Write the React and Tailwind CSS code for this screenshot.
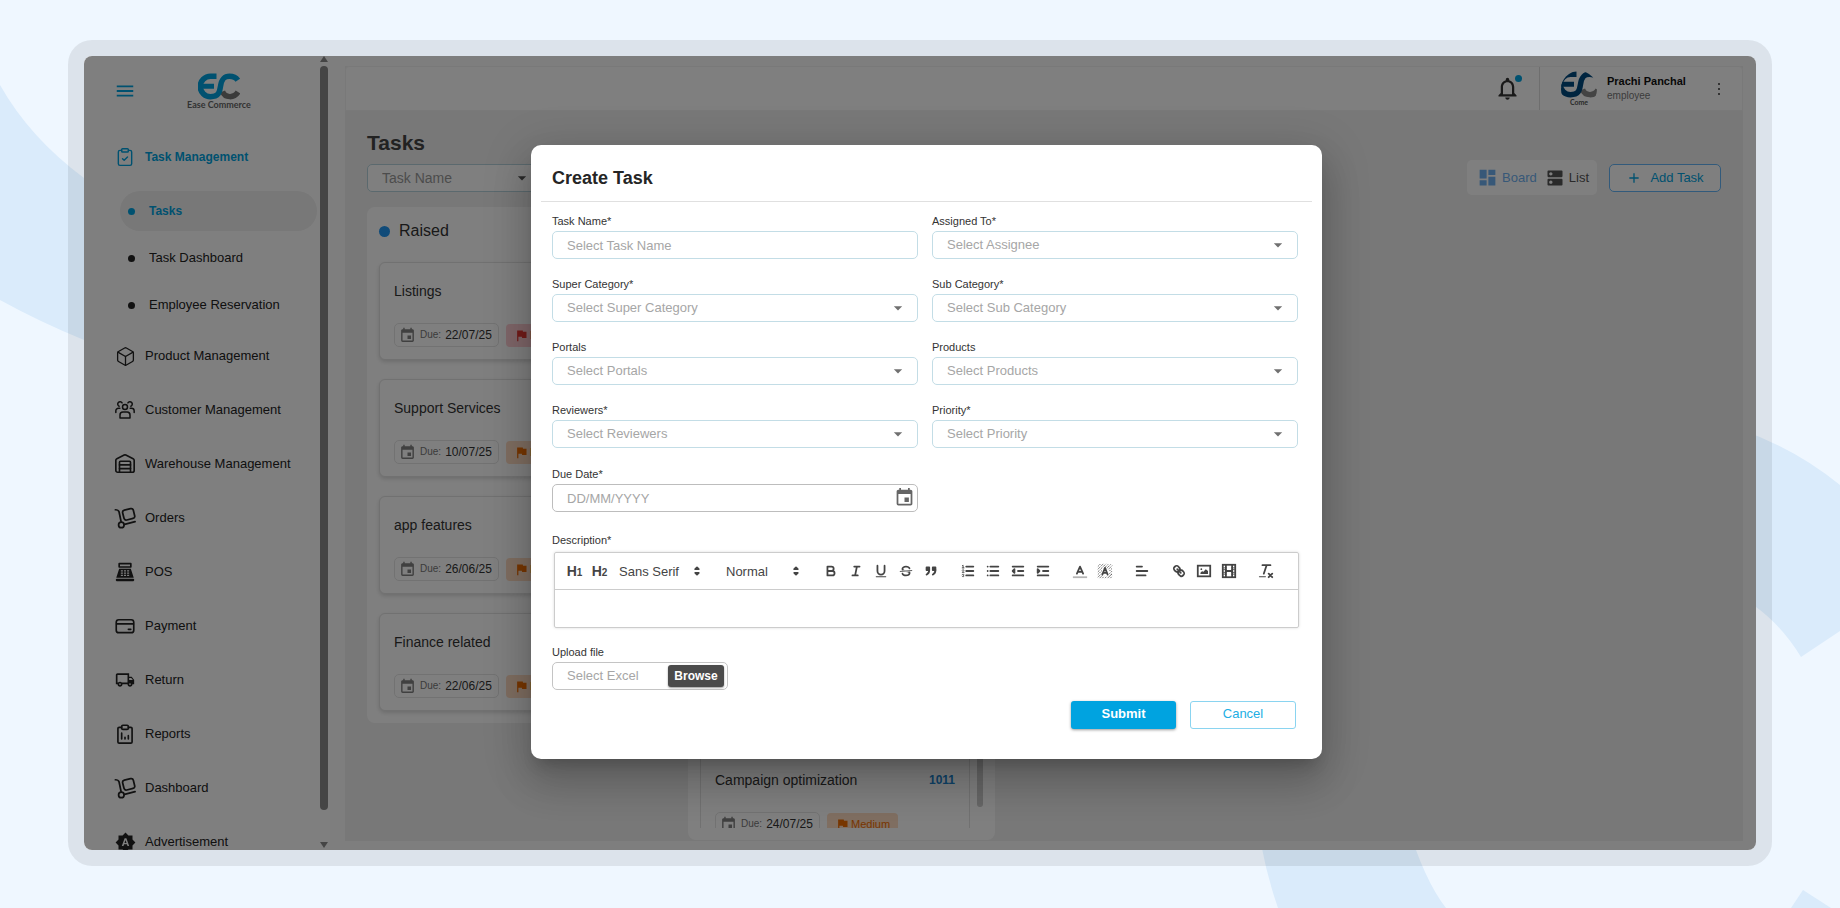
import { useState } from "react";
import { Box, ClipboardCheck, Warehouse } from "lucide-react";
import {
  MdAdd, MdArrowDropDown, MdBrightnessAuto, MdDashboard, MdDns, MdEvent, MdFlag,
  MdMenu, MdNotificationsNone, MdOutlineLocalShipping,
} from "react-icons/md";

/* ---------- icons the packages don't have ---------- */

function LineIcon({ children, size = 20, stroke = 1.8 }) {
  return (
    <svg width={size} height={size} viewBox="0 0 24 24" fill="none" stroke="currentColor" strokeWidth={stroke} strokeLinecap="round" strokeLinejoin="round" aria-hidden="true">
      {children}
    </svg>
  );
}

const PeopleIcon = () => (
  <LineIcon>
    <circle cx="12" cy="8.500" r="3" />
    <path d="M6 21.500v-3.500a3.500 3.500 0 0 1 3.500-3.500h5a3.500 3.500 0 0 1 3.500 3.500v3.500z" />
    <path d="M8.500 3.500A2.800 2.800 0 1 0 5 7.500M15.500 3.500a2.800 2.800 0 1 1 3.500 4" />
    <path d="M1 15v-2A3.200 3.200 0 0 1 4.200 9.800h1.600M23 15v-2a3.200 3.200 0 0 0-3.200-3.200h-1.600" />
  </LineIcon>
);

const DollyIcon = () => (
  <LineIcon size={22} stroke={1.9}>
    <path d="M1.500 3c2 0 3.300.300 4 2.200l2.300 11" />
    <rect x="10" y="2.500" width="12" height="11" rx="2.500" transform="rotate(-14 16 8)" />
    <circle cx="8" cy="19.500" r="3" />
    <path d="M11.500 19 23 16" />
  </LineIcon>
);

const RegisterIcon = () => (
  <svg width="20" height="20" viewBox="0 0 24 24" fill="currentColor" aria-hidden="true">
    <path fillRule="evenodd" d="M5 1h14a1 1 0 0 1 1 1v4a1 1 0 0 1-1 1H5a1 1 0 0 1-1-1V2a1 1 0 0 1 1-1Zm1 2v2h12V3Z" />
    <path fillRule="evenodd" d="M5 8h14l3.500 11h-21Zm2 2v1.500h2.500V10Zm3.700 0v1.500h2.600V10Zm3.800 0v1.500H17V10Zm-7.500 2.700v1.500h2.500v-1.500Zm3.700 0v1.500h2.600v-1.500Zm3.800 0v1.500H17v-1.500ZM7 15.400v1.400h2.500v-1.400Zm3.700 0v1.400h2.600v-1.400Zm3.800 0v1.400H17v-1.400Z" />
    <rect x="1" y="20" width="22" height="3" rx="1" />
  </svg>
);

const PaymentIcon = () => (
  <LineIcon stroke={2}>
    <rect x="1.500" y="4.500" width="21" height="15.500" rx="3" />
    <path d="M2 9.500h20M16 16h3" />
  </LineIcon>
);

const ReportIcon = () => (
  <LineIcon stroke={2}>
    <path d="M8 4H5a1.500 1.500 0 0 0-1.500 1.500v16A1.500 1.500 0 0 0 5 23h14a1.500 1.500 0 0 0 1.500-1.500v-16A1.500 1.500 0 0 0 19 4h-3" />
    <rect x="8" y="1.500" width="8" height="5" rx="1.500" />
    <path d="M8 18v-7M12 18v-2M16 18v-4" />
  </LineIcon>
);

const DotsIcon = () => (
  <svg width="18" height="18" viewBox="0 0 18 18" fill="currentColor" aria-hidden="true">
    <circle cx="9" cy="4" r="1.100" />
    <circle cx="9" cy="9" r="1.100" />
    <circle cx="9" cy="14" r="1.100" />
  </svg>
);

function Logo({ className, main, tail }) {
  return (
    <svg viewBox="0 0 42 27" className={className} fill="none" strokeWidth="5.500" aria-hidden="true">
      <path stroke={tail} d="M24.500 18.500c2.500 6.500 11.500 7 15.500.500" />
      <path stroke={main} d="M18.500 3.200H12.500a10 10 0 0 0 0 20.500c8 0 9-4 10-10.300C23.600 6 26 3.200 31.500 3.200c4 0 6.500 1.300 8.300 4" />
      <path stroke={main} strokeWidth="5" d="M3 13.300h13" />
    </svg>
  );
}

/* ---------- rich text editor toolbar ---------- */

function EditorIcon({ children }) {
  return (
    <svg width="16" height="16" viewBox="0 0 18 18" fill="none" stroke="currentColor" strokeWidth="2" strokeLinecap="round" strokeLinejoin="round" aria-hidden="true">
      {children}
    </svg>
  );
}

const solid = { fill: "currentColor", stroke: "none" };

const editorIcons = {
  Bold: (
    <path d="M5 4h4.500a2.500 2.500 0 0 1 0 5H5zM5 9h5.500a2.500 2.500 0 0 1 0 5H5z" />
  ),
  Italic: <path d="M7 4h6M5 14h6M8 14l2-10" />,
  Underline: (
    <>
      <path d="M5 3v6a4 4 0 0 0 8 0V3" />
      <rect {...solid} x="3" y="15" width="12" height="1" rx=".5" />
    </>
  ),
  Strike: (
    <>
      <path strokeWidth="1" d="M15.500 8.500l-13 1" />
      <path {...solid} d="M9.007 8C6.542 7.791 6 7.519 6 6.500 6 5.792 7.283 5 9 5c1.571 0 2.765.679 2.969 1.309a1 1 0 0 0 1.900-.617C13.356 4.106 11.354 3 9 3 6.200 3 4 4.538 4 6.500a3.200 3.200 0 0 0 .500 1.843Z" />
      <path {...solid} d="M8.984 10c2.473.208 3.016.479 3.016 1.500 0 .708-1.283 1.500-3 1.500-1.571 0-2.765-.679-2.969-1.309a1 1 0 1 0-1.900.617C4.644 13.894 6.646 15 9 15c2.800 0 5-1.538 5-3.500a3.200 3.200 0 0 0-.500-1.843Z" />
    </>
  ),
  Quote: (
    <g fill="currentColor">
      <rect x="4" y="5" width="3" height="3" />
      <rect x="11" y="5" width="3" height="3" />
      <path d="M7 8c0 4.031-3 5-3 5M14 8c0 4.031-3 5-3 5" />
    </g>
  ),
  "Ordered list": (
    <>
      <path d="M7 4h8M7 9h8M7 14h8" />
      <path strokeWidth="1" d="M2.700 3l.8-.5v3M2.500 5.500h2M4.500 10.500h-2c0-.234 1.850-1.076 1.850-2.234A.959.959 0 0 0 2.500 8.156M2.500 14.846a.959.959 0 0 0 1.850-.109A.700.700 0 0 0 3.750 14a.688.688 0 0 0 .600-.736.959.959 0 0 0-1.850-.109" />
    </>
  ),
  "Bullet list": <path d="M6 4h9M6 9h9M6 14h9M3 4h0M3 9h0M3 14h0" />,
  Outdent: (
    <>
      <path d="M3 14h12M3 4h12M9 9h6" />
      <path fill="currentColor" d="M5 7v4L3 9z" />
    </>
  ),
  Indent: (
    <>
      <path d="M3 14h12M3 4h12M9 9h6" />
      <path fill="currentColor" d="M3 7v4l2-2z" />
    </>
  ),
  "Text colour": (
    <>
      <path opacity=".4" strokeLinecap="butt" d="M1 16h16" />
      <path d="M5.500 12 9 4l3.500 8M11.600 10H6.400" />
    </>
  ),
  "Background colour": (
    <>
      <path strokeWidth="1" strokeDasharray="1.400 1" strokeLinecap="butt" d="M1 4l3-3M1 7l6-6M1 10l9-9M1 13l5-5M1 16l4-4M8 6l5-5M11 6l5-5M13 7l4-4M14 9l3-3M14 12l3-3M14 15l3-3M3 17l3-3M6 17l2-2M9 17l2-2M12 17l5-5M15 17l2-2" />
      <path d="M6 13l3-7.500L12 13M11 11H7" />
    </>
  ),
  Align: <path d="M3 9h12M3 14h10M3 4h6" />,
  Link: (
    <path d="M7 7l4 4M8.900 4.577a3.476 3.476 0 0 1 .360 4.679A3.476 3.476 0 0 1 4.577 8.900C3.185 7.500 2.035 6.400 4.217 4.217S7.500 3.185 8.900 4.577ZM13.423 9.100a3.476 3.476 0 0 0-4.679-.360 3.476 3.476 0 0 0 .360 4.679c1.392 1.392 2.500 2.542 4.679.360S14.815 10.500 13.423 9.100Z" />
  ),
  Image: (
    <>
      <rect x="2" y="3" width="14" height="12" strokeLinejoin="miter" />
      <circle {...solid} cx="6" cy="7" r="1" />
      <path {...solid} d="M5 12.500V11l2-2 1 1 3-3 2.500 2v3.500z" />
    </>
  ),
  Video: (
    <>
      <rect x="2" y="2" width="14" height="14" strokeLinejoin="miter" />
      <path d="M5.500 2v14M12.500 2v14M6 9h6" />
      <path strokeWidth="1" d="M3 5.500h3M3 7.500h3M3 10.500h3M3 12.500h3M12 5.500h3M12 7.500h3M12 10.500h3M12 12.500h3" />
    </>
  ),
  "Clear formatting": (
    <>
      <path d="M5 2.500h9M6.500 12l3-9" />
      <path d="M12 12l4 4M16 12l-4 4" />
      <rect {...solid} x="1" y="15" width="8" height="1" rx=".5" />
    </>
  ),
};

const editorGroups = [
  ["Bold", "Italic", "Underline", "Strike", "Quote"],
  ["Ordered list", "Bullet list", "Outdent", "Indent"],
  ["Text colour", "Background colour"],
  ["Align"],
  ["Link", "Image", "Video"],
  ["Clear formatting"],
];

function EditorPicker({ label, options, className }) {
  return (
    <div className={`relative ${className}`}>
      <select aria-label={label} className="w-full h-6 pl-[7px] appearance-none bg-transparent text-[13px] text-[#444] outline-none">
        {options.map((o) => <option key={o}>{o}</option>)}
      </select>
      <span className="absolute right-0.5 top-1 pointer-events-none">
        <EditorIcon>
          <path fill="currentColor" d="M7 11l2 2 2-2zM7 7l2-2 2 2z" />
        </EditorIcon>
      </span>
    </div>
  );
}

function Editor() {
  return (
    <div className="mx-0.5 border border-[#ccc] rounded-[2px] shadow-[0_0_3px_rgba(0,0,0,0.15)]">
      <div className="flex items-center gap-3 h-[37px] pl-[7px] border-b border-[#ccc] text-[#444]">
        <div className="flex items-center">
          {[1, 2].map((n) => (
            <button key={n} type="button" aria-label={`Heading ${n}`} className="w-[25px] h-6 text-sm font-bold leading-6">
              H<span className="text-[10px]">{n}</span>
            </button>
          ))}
          <EditorPicker label="Font" options={["Sans Serif", "Serif", "Monospace"]} className="w-[95px]" />
        </div>
        <EditorPicker label="Size" options={["Normal", "Small", "Large", "Huge"]} className="w-[87px]" />
        {editorGroups.map((group) => (
          <div key={group[0]} className="flex">
            {group.map((name) => (
              <button key={name} type="button" aria-label={name} className="w-[25px] h-6 flex items-center justify-center">
                <EditorIcon>{editorIcons[name]}</EditorIcon>
              </button>
            ))}
          </div>
        ))}
      </div>
      <textarea id="description" className="block w-full h-[37px] px-3 py-2 text-[13px] text-[#444] resize-none outline-none" />
    </div>
  );
}

/* ---------- form ---------- */

function Field({ id, label, children, className = "" }) {
  return (
    <div className={className}>
      <label htmlFor={id} className="block mb-[3px] text-[11px] leading-[14px] text-[#333]">{label}</label>
      {children}
    </div>
  );
}

function SelectBox({ id, placeholder }) {
  return (
    <div className="relative">
      <select id={id} defaultValue="" className="w-full h-7 pl-3.5 pr-10 appearance-none rounded-[5px] border border-[#c3dde6] bg-white text-[13px] text-[#a6a6a6] outline-none">
        <option value="">{placeholder}</option>
      </select>
      <MdArrowDropDown size={20} className="absolute right-2.5 top-1 text-[#707070] pointer-events-none" />
    </div>
  );
}

const selects = [
  ["superCategory", "Super Category*", "Select Super Category"],
  ["subCategory", "Sub Category*", "Select Sub Category"],
  ["portals", "Portals", "Select Portals"],
  ["products", "Products", "Select Products"],
  ["reviewers", "Reviewers*", "Select Reviewers"],
  ["priority", "Priority*", "Select Priority"],
];

function CreateTaskModal() {
  const [taskName, setTaskName] = useState("");
  const [dueDate, setDueDate] = useState("");

  return (
    <div className="absolute inset-0 z-10 flex items-center justify-center pl-[13px] pb-0.5 bg-black/50">
      <div role="dialog" aria-labelledby="create-task" className="w-full max-w-[791px] rounded-[10px] bg-white shadow-[0_11px_15px_-7px_rgba(0,0,0,0.2),0_24px_38px_3px_rgba(0,0,0,0.14),0_9px_46px_8px_rgba(0,0,0,0.12)]">
        <div className="mx-2.5 px-[11px] pt-[21px] pb-[11px] border-b border-[#e0e0e0]">
          <h2 id="create-task" className="text-lg leading-6 font-bold text-[#252525]">Create Task</h2>
        </div>

        <form onSubmit={(e) => e.preventDefault()} className="pl-[21px] pr-6 pt-3 pb-[30px]">
          <div className="grid grid-cols-2 gap-x-3.5 gap-y-[18px]">
            <Field id="taskName" label="Task Name*">
              <input id="taskName" type="text" placeholder="Select Task Name" value={taskName} onChange={(e) => setTaskName(e.target.value)}
                className="block w-full h-7 px-3.5 rounded-[5px] border border-[#c3dde6] text-[13px] placeholder:text-[#a6a6a6] outline-none" />
            </Field>
            <Field id="assignedTo" label="Assigned To*">
              <SelectBox id="assignedTo" placeholder="Select Assignee" />
            </Field>
            {selects.map(([id, label, placeholder]) => (
              <Field key={id} id={id} label={label}>
                <SelectBox id={id} placeholder={placeholder} />
              </Field>
            ))}
            <Field id="dueDate" label="Due Date*" className="mt-px">
              <div className="relative">
                <input id="dueDate" type="text" placeholder="DD/MM/YYYY" value={dueDate} onChange={(e) => setDueDate(e.target.value)}
                  className="block w-full h-7 px-3.5 rounded-[5px] border border-[#bdbdbd] text-[13px] placeholder:text-[#a6a6a6] outline-none" />
                <button type="button" aria-label="Choose date" className="absolute right-[3px] top-[3px]">
                  <MdEvent size={21} className="text-[#666]" />
                </button>
              </div>
            </Field>
          </div>

          <div className="mt-[21px]">
            <label htmlFor="description" className="block mb-[5px] text-[11px] leading-[14px] text-[#333]">Description*</label>
            <div className="-mr-[3px]"><Editor /></div>
          </div>

          <Field id="upload" label="Upload file" className="mt-[17px]">
            <div className="flex items-center w-44 h-7 pr-[3px] rounded-[5px] border border-[#c4c4c4]">
              <input id="upload" type="text" readOnly placeholder="Select Excel" className="flex-1 min-w-0 pl-3.5 text-[13px] placeholder:text-[#a6a6a6] outline-none" />
              <button type="button" className="w-14 h-[22px] rounded-[3px] bg-[#4b4b4b] text-xs font-bold text-white shadow-[0_1px_2px_rgba(0,0,0,0.4)]">Browse</button>
            </div>
          </Field>

          <div className="flex justify-end gap-3.5 mt-[11px] pr-0.5">
            <button type="submit" className="w-[105px] h-7 pb-0.5 rounded-[3px] bg-[#00a3e0] text-[13px] font-bold text-white shadow-[0_1px_3px_rgba(0,0,0,0.4)]">Submit</button>
            <button type="button" className="w-[106px] h-7 pb-0.5 rounded-[3px] border border-[#8ad4f0] text-[13px] text-[#22aee4]">Cancel</button>
          </div>
        </form>
      </div>
    </div>
  );
}

/* ---------- sidebar ---------- */

const subMenu = ["Tasks", "Task Dashboard", "Employee Reservation"];

const menu = [
  { label: "Product Management", icon: <Box size={21} strokeWidth={1.5} /> },
  { label: "Customer Management", icon: <PeopleIcon /> },
  { label: "Warehouse Management", icon: <Warehouse size={22} strokeWidth={1.8} /> },
  { label: "Orders", icon: <DollyIcon /> },
  { label: "POS", icon: <RegisterIcon /> },
  { label: "Payment", icon: <PaymentIcon /> },
  { label: "Return", icon: <MdOutlineLocalShipping size={20} /> },
  { label: "Reports", icon: <ReportIcon /> },
  { label: "Dashboard", icon: <DollyIcon /> },
  { label: "Advertisement", icon: <MdBrightnessAuto size={21} /> },
];

function Sidebar() {
  return (
    <aside className="flex w-[246px] shrink-0 bg-white">
      <div className="flex-1 overflow-hidden">
        <div className="flex items-start h-[74px] pl-[30px] pt-[17px]">
          <button type="button" aria-label="Menu" className="mt-[7px] text-[#00a3e0]"><MdMenu size={22} /></button>
          <div className="ml-[51px] flex flex-col items-center">
            <Logo className="w-[42px] h-[27px]" main="#00a3e0" tail="#777" />
            <span className="font-[Lato] text-[9px] leading-[10px] font-bold text-[#666]">Ease Commerce</span>
          </div>
        </div>
        <nav className="text-[13px] text-[#222]">
          <a href="#tasks" className="flex items-center h-[54px] pl-[30px] text-xs font-bold text-[#00a3e0]">
            <span className="w-[22px] flex justify-center"><ClipboardCheck size={20} strokeWidth={1.7} /></span>
            <span className="ml-[9px]">Task Management</span>
          </a>
          <div className="flex flex-col gap-[7px] pt-[7px] pb-1 pl-9 pr-[3px]">
            {subMenu.map((label, i) => (
              <a key={label} href="#tasks" className={`flex items-center gap-[14px] h-10 pl-2 rounded-full ${i === 0 ? "bg-[#f0f0f0] font-bold text-xs text-[#00a3e0]" : ""}`}>
                <span className={`w-[7px] h-[7px] rounded-full ${i === 0 ? "bg-[#00a3e0]" : "bg-[#222]"}`} />
                {label}
              </a>
            ))}
          </div>
          {menu.map(({ label, icon }) => (
            <a key={label} href="#tasks" className="flex items-center h-[54px] pl-[30px]">
              <span className="w-[22px] flex justify-center">{icon}</span>
              <span className="ml-[9px]">{label}</span>
            </a>
          ))}
        </nav>
      </div>
      <div className="w-2 mr-0.5 flex flex-col items-center gap-1">
        <svg width="8" height="6" viewBox="0 0 8 6" fill="#8a8a8a"><path d="M4 0l4 6H0z" /></svg>
        <div className="w-2 flex-1 rounded-full bg-[#8a8a8a]" />
        <svg width="8" height="6" viewBox="0 0 8 6" fill="#8a8a8a" className="mt-7 mb-0.5"><path d="M4 6l4-6H0z" /></svg>
      </div>
    </aside>
  );
}

/* ---------- board ---------- */

const raised = [
  { title: "Listings", due: "22/07/25", level: "High" },
  { title: "Support Services", due: "10/07/25", level: "Medium" },
  { title: "app features", due: "26/06/25", level: "Medium" },
  { title: "Finance related", due: "22/06/25", level: "Medium" },
];

function TaskCard({ title, due, level, id }) {
  return (
    <article className="h-[98px] shrink-0 px-[14px] pt-[18px] rounded-md border border-[#e2e2e2] bg-white shadow-[0_2px_4px_rgba(0,0,0,0.15)]">
      <div className="flex items-center justify-between">
        <h4 className="text-sm leading-5 text-[#333]">{title}</h4>
        {id && <a href="#task" className="text-xs font-bold text-[#2185d0]">{id}</a>}
      </div>
      <div className="flex items-center gap-[7px] mt-[22px]">
        <span className="flex items-center h-6 w-[105px] pl-1 rounded-[5px] border border-[#e5e5e5] text-[#333] text-xs">
          <MdEvent size={17} className="text-[#808080]" />
          <span className="ml-1 mr-1 text-[10px] text-[#777]">Due:</span>
          {due}
        </span>
        <span className={`flex items-center h-[23px] px-2 rounded text-[11px] ${level === "High" ? "bg-[#ffcdd2] text-[#e53935]" : "bg-[#ffdcc2] text-[#ef6c00]"}`}>
          <MdFlag size={15} className="mr-px" />{level}
        </span>
      </div>
    </article>
  );
}

function Header() {
  return (
    <header className="flex items-center justify-end h-[45px] shrink-0 border border-[#f3f3f3] rounded-t bg-white">
      <button type="button" aria-label="Notifications" className="relative mr-[18px] text-[#333]">
        <MdNotificationsNone size={27} />
        <span className="absolute -right-px top-0 w-[7px] h-[7px] rounded-full bg-[#00a3e0]" />
      </button>
      <div className="flex items-center w-[203px] h-full pl-[21px] pr-3.5 border-l border-[#ddd]">
        <div className="flex flex-col items-center w-9 h-9 overflow-hidden rounded-full">
          <Logo className="w-[42px] h-[27px] shrink-0" main="#004a80" tail="#888" />
          <span className="font-[Lato] text-[7px] leading-[8px] font-bold text-[#555]">Come</span>
        </div>
        <div className="ml-2.5">
          <p className="text-[11px] leading-[15px] font-bold text-[#111]">Prachi Panchal</p>
          <p className="text-[10px] leading-[14px] text-[#777]">employee</p>
        </div>
        <button type="button" aria-label="Account menu" className="ml-auto text-[#444]"><DotsIcon /></button>
      </div>
    </header>
  );
}

function Board() {
  return (
    <main className="flex-1 min-w-0 flex flex-col bg-[#f1f1f1]">
      <Header />
      <section className="flex-1 min-h-0 flex flex-col px-[22px] pt-5 pb-px">
        <h1 className="text-[21px] leading-6 font-bold text-[#444]">Tasks</h1>
        <div className="flex items-center h-[35px] mt-[5px]">
          <div className="relative w-[175px]">
            <select aria-label="Task Name" className="w-full h-7 pl-3.5 appearance-none rounded-[5px] border border-[#b7d3dc] bg-white text-sm text-[#999] outline-none">
              <option>Task Name</option>
            </select>
            <MdArrowDropDown size={20} className="absolute right-2.5 top-1 text-[#555] pointer-events-none" />
          </div>
          <div className="ml-auto flex items-center h-[35px] pl-2.5 pr-2 rounded-[5px] bg-white text-[13px]">
            <button type="button" className="flex items-center gap-1 text-[#6fb0f0]"><MdDashboard size={21} />Board</button>
            <button type="button" className="flex items-center gap-1 ml-2 text-[#555]"><MdDns size={20} />List</button>
          </div>
          <button type="button" className="flex items-center justify-center gap-2 w-28 h-7 ml-3 rounded-[5px] border border-[#64b5f6] bg-white text-[13px] text-[#00a3e0]">
            <MdAdd size={16} />Add Task
          </button>
        </div>

        <div className="flex flex-1 min-h-0 gap-3.5 mt-3">
          <div className="w-[307px] self-start flex flex-col gap-[19px] p-3 rounded-lg bg-white">
            <h3 className="flex items-center gap-[9px] h-6 text-base text-[#333]">
              <span className="w-[11px] h-[11px] rounded-full bg-[#2196f3]" />Raised
            </h3>
            {raised.map((task) => <TaskCard key={task.title} {...task} />)}
          </div>
          <div className="w-[307px] flex gap-[7px] pl-3 pr-3 pb-3 pt-14 rounded-lg bg-white">
            <div className="flex-1 flex flex-col justify-end">
              <div className="h-[77px] overflow-hidden">
                <TaskCard title="Campaign optimization" due="24/07/25" level="Medium" id="1011" />
              </div>
            </div>
            <div className="w-1.5 mb-[21px] rounded-full bg-[#ccc]" />
          </div>
        </div>
      </section>
    </main>
  );
}

export default function App() {
  return (
    <div className="relative h-screen overflow-hidden bg-[#eff7ff] px-[68px] pt-10 pb-[42px] font-['Liberation_Sans',Arial,sans-serif]">
      {/* Backdrop arcs */}
      <svg className="absolute inset-0 w-full h-full" viewBox="0 0 1840 908" preserveAspectRatio="none" fill="#daebfb" aria-hidden="true">
        <path d="M0 85Q30 138 84 178L140 205V352L84 340Q40 322 0 300Z" />
        <path d="M1700 418Q1780 436 1840 485V631L1801 657Q1782 626 1756 607L1700 570Z" />
        <path d="M1255 800Q1260 856 1278 908H1446Q1424 880 1406 820Z" />
        <path d="M1803 890L1791 908H1831Z" />
      </svg>

      <div className="relative h-full p-4 rounded-3xl bg-black/8">
        <div className="relative flex h-full overflow-hidden rounded-lg bg-[#fdfdfd]">
          <Sidebar />
          <div className="flex flex-1 min-w-0 pl-[15px] pt-2.5 pr-[13px] pb-[9px]">
            <Board />
          </div>
          <CreateTaskModal />
        </div>
      </div>
    </div>
  );
}
